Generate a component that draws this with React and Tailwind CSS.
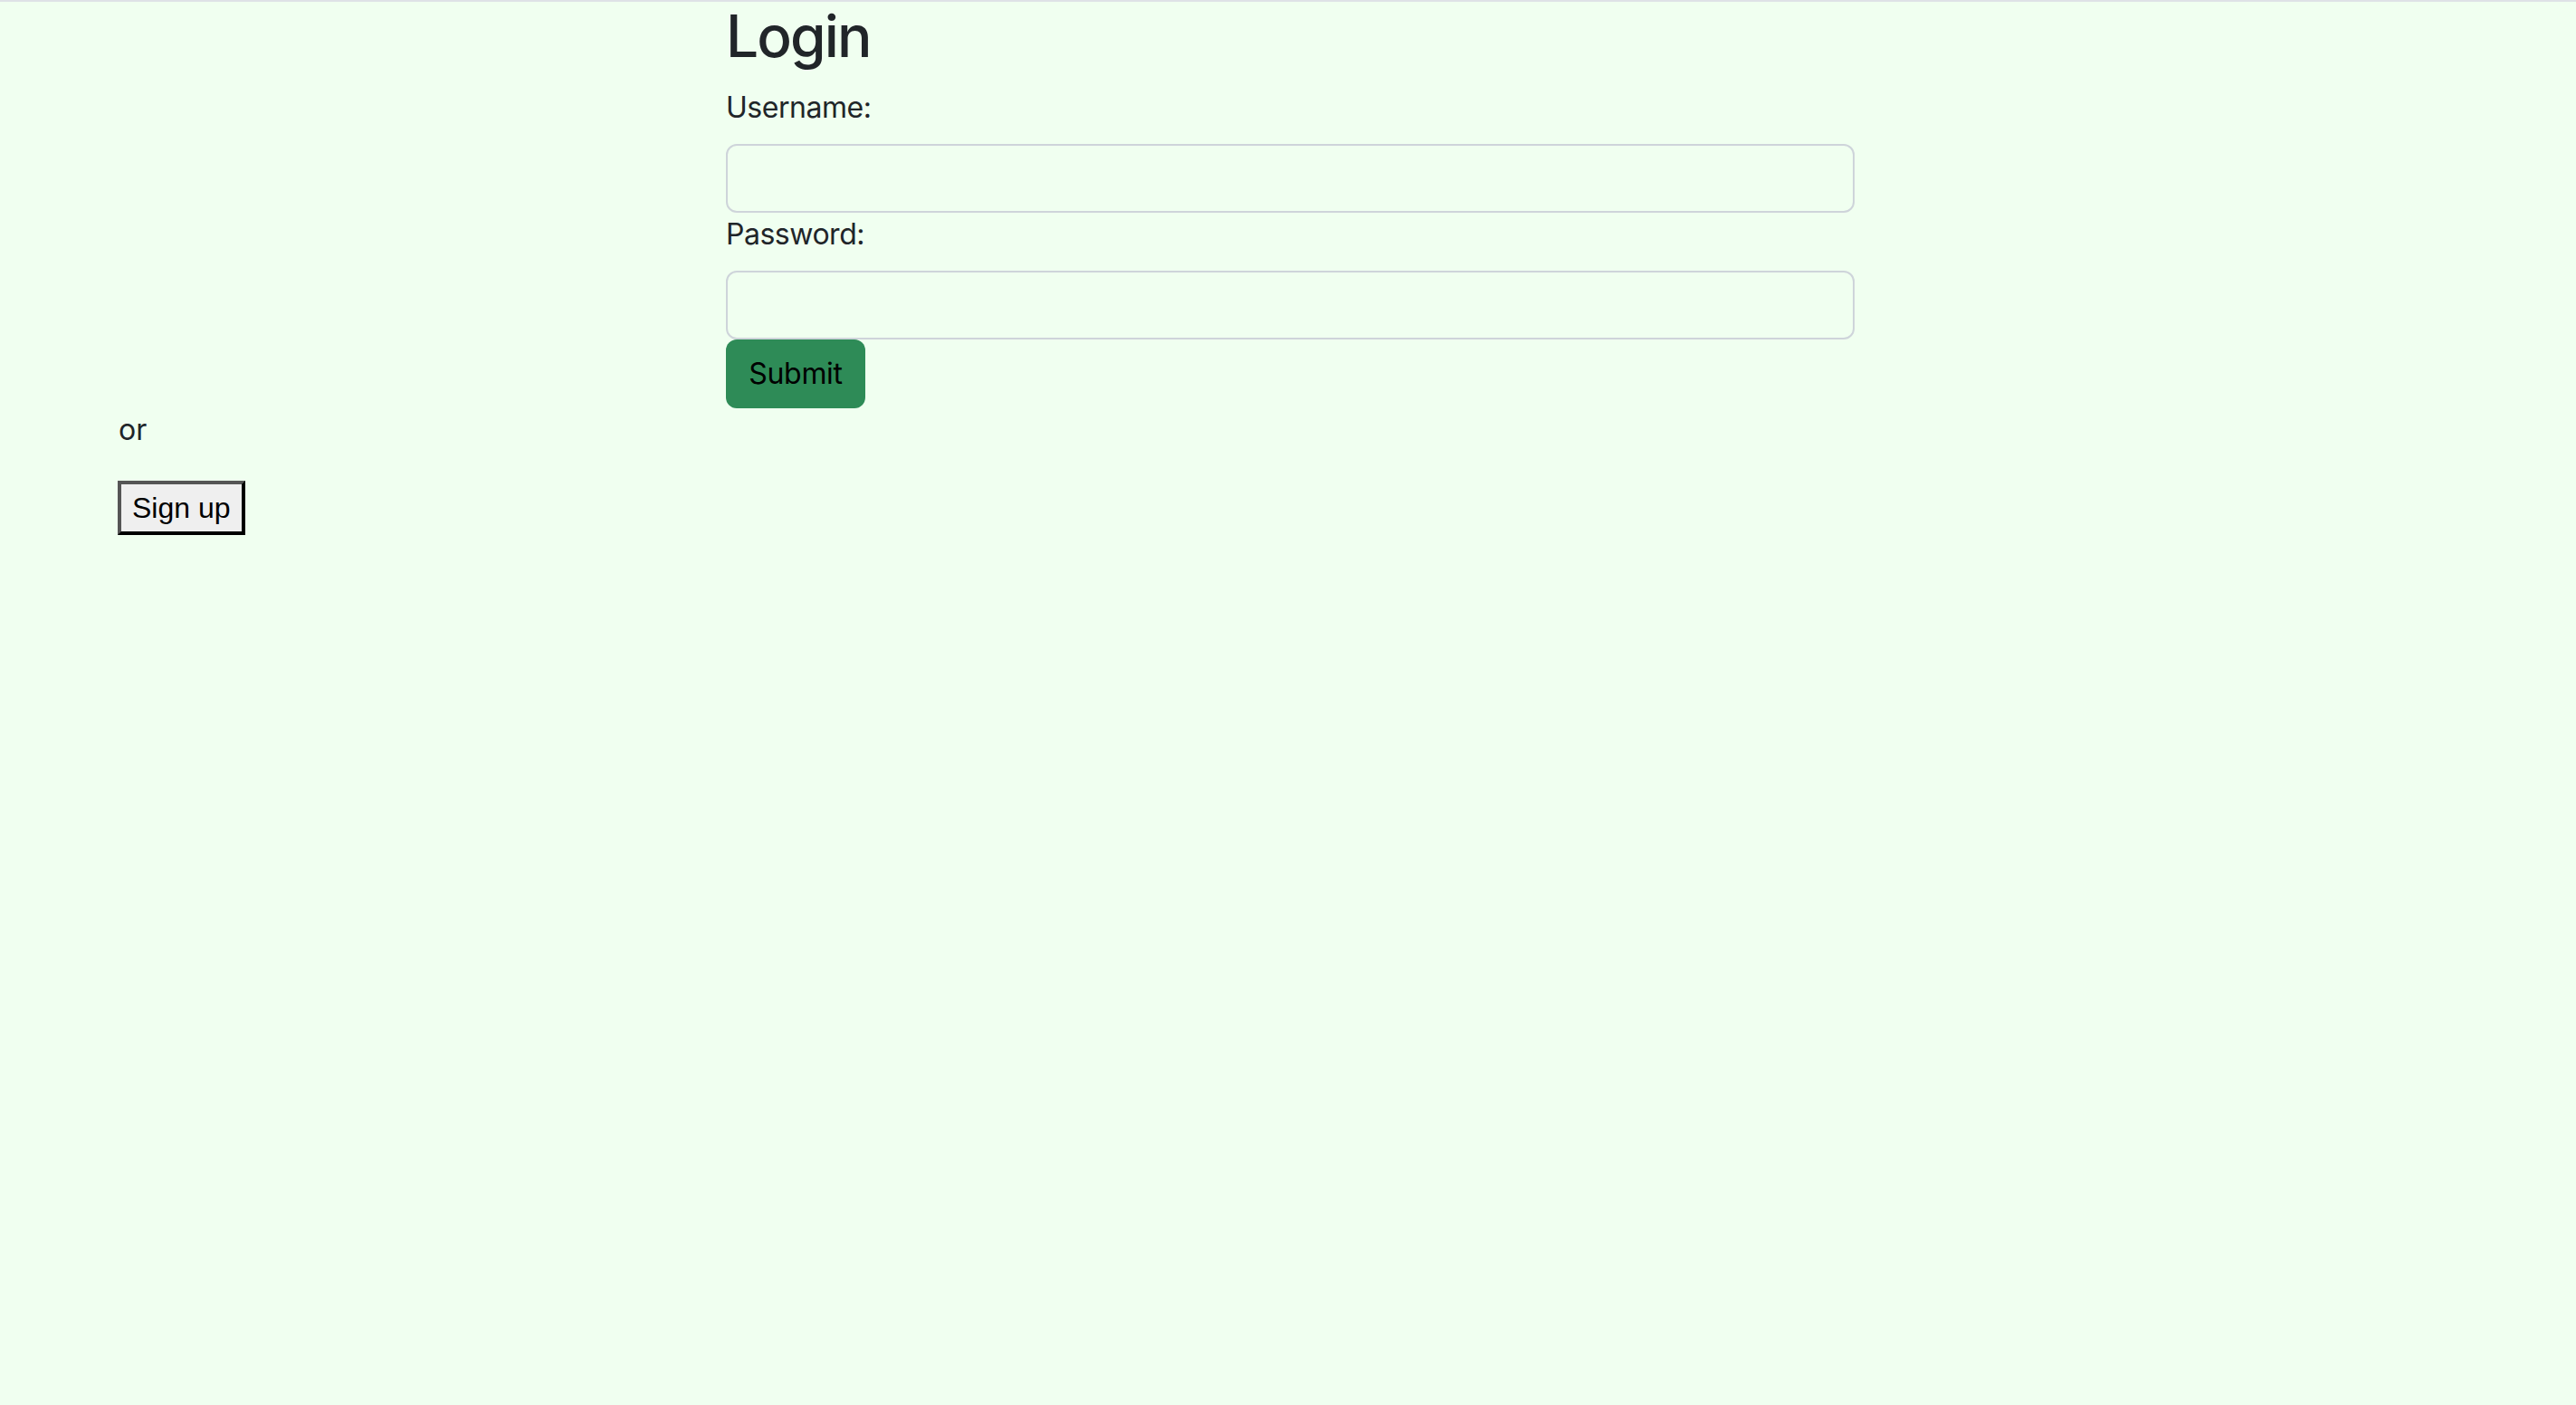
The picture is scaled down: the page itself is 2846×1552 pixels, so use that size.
import React, { useState } from 'react'

/* Login page: bootstrap-ish form centered, plain sign up link below */

const FONT = "font-['Inter','Noto_Sans',sans-serif]"

const Field = ({ id, label, type, value, onChange }) => (
  <div className="flex flex-col">
    <label htmlFor={id} className="text-[32px] leading-[48px] mb-[16px] tracking-[-0.015em] text-[#212529]">
      {label}
    </label>
    <input
      id={id}
      type={type}
      value={value}
      onChange={e => onChange(e.target.value)}
      className="h-[76px] w-full rounded-[12px] border-2 border-[#ced4da] bg-transparent px-[24px] text-[32px] outline-none"
    />
  </div>
)

export default function App() {
  const [username, setUsername] = useState('')
  const [password, setPassword] = useState('')

  return (
    <div className={`min-h-screen bg-[#f0fff0] text-[#212529] ${FONT}`}>
      <div className="h-[2px] bg-[#dee2e6]" />

      <form
        className="mx-auto w-[1252px] pl-[5px]"
        onSubmit={e => e.preventDefault()}
      >
        <h2 className="text-[64px] font-medium leading-[1.2] mb-[16px] tracking-[-0.03em]">Login</h2>
        <Field id="username" label="Username:" type="text" value={username} onChange={setUsername} />
        <Field id="password" label="Password:" type="password" value={password} onChange={setPassword} />
        <button
          type="submit"
          className="h-[76px] w-[154px] rounded-[12px] bg-[#2e8b57] text-[32px] leading-[48px] tracking-[-0.01em] text-black"
        >
          Submit
        </button>
      </form>

      <div className="pl-[130px]">
        <p className="text-[32px] leading-[48px] mb-[32px] pl-[1px]">or</p>
        <button
          type="button"
          className="h-[60px] border-[4px] border-solid border-t-[#555555] border-l-[#555555] border-b-black border-r-black bg-[#efefef] px-[12px] py-[2px] text-[32px] leading-[48px] text-black font-['Liberation_Sans',Arial,sans-serif]"
        >
          Sign up
        </button>
      </div>
    </div>
  )
}
